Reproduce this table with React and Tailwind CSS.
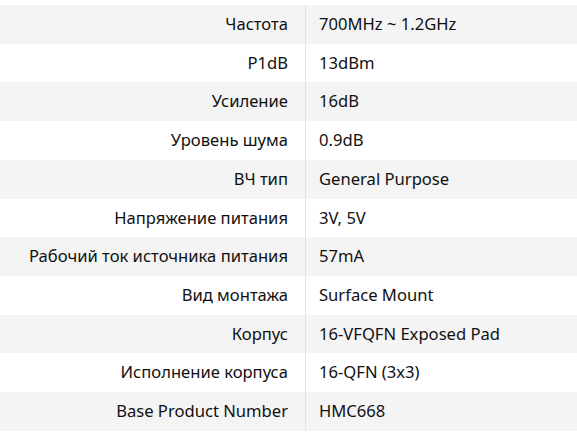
export default function App() {
  const rows = [
    ["Частота", "700MHz ~ 1.2GHz"],
    ["P1dB", "13dBm"],
    ["Усиление", "16dB"],
    ["Уровень шума", "0.9dB"],
    ["ВЧ тип", "General Purpose"],
    ["Напряжение питания", "3V, 5V"],
    ["Рабочий ток источника питания", "57mA"],
    ["Вид монтажа", "Surface Mount"],
    ["Корпус", "16-VFQFN Exposed Pad"],
    ["Исполнение корпуса", "16-QFN (3x3)"],
    ["Base Product Number", "HMC668"],
  ];
  return (
    <div className="w-[577px] h-[437px] bg-white pt-[5px] text-[#111] text-[16.6px]" style={{ fontFamily: '"Noto Sans", sans-serif' }}>
      {rows.map(([k, v], i) => (
        <div key={i} className={`flex h-[38.73px] ${i % 2 === 0 ? "bg-[#f4f4f4]" : "bg-white"}`}>
          <div className="w-[306px] shrink-0 flex items-center justify-end pr-[17px] border-r border-[#e3e3e3]">
            {k}
          </div>
          <div className="flex-1 flex items-center pl-[13px]">{v}</div>
        </div>
      ))}
    </div>
  );
}
